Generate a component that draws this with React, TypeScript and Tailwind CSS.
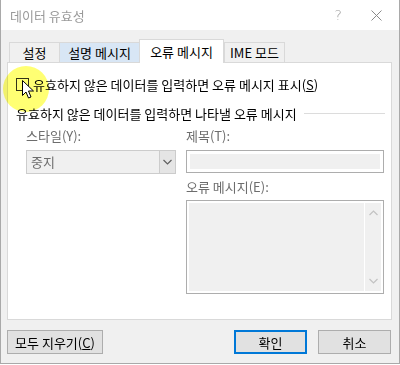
import React from 'react';

const FONT = { fontFamily: "'Noto Sans CJK KR', 'Noto Sans', sans-serif" };

function Cursor() {
  return (
    <svg width="13" height="20" viewBox="0 0 13 20" className="block">
      <path
        d="M0.5 0.5 L0.5 15.5 L4 12 L6.5 18 L9 17 L6.5 11 L11.5 11 Z"
        fill="#ffffff"
        stroke="#000000"
        strokeWidth="1"
        strokeLinejoin="miter"
      />
    </svg>
  );
}

function Chevron({ up = false, color = '#606060' }: { up?: boolean; color?: string }) {
  return (
    <svg width="9" height="6" viewBox="0 0 9 6" className="block">
      <path d={up ? 'M0.5 5 L4.5 1 L8.5 5' : 'M0.5 1 L4.5 5 L8.5 1'} fill="none" stroke={color} strokeWidth="1.2" />
    </svg>
  );
}

const TABS = [
  { label: '설정', w: 'w-[51px]', kind: 'idle' },
  { label: '설명 메시지', w: 'w-[81px]', kind: 'hover' },
  { label: '오류 메시지', w: 'w-[85px]', kind: 'active' },
  { label: 'IME 모드', w: 'w-[61px]', kind: 'idle' },
];

export default function App() {
  return (
    <div className="h-[365px] w-[400px] bg-white text-[13px] text-black" style={FONT}>
      <div className="flex h-[364px] w-[400px] flex-col border-x border-b border-[#a9a9a9]">
        {/* Title bar */}
        <div className="flex h-[30px] items-center bg-white pl-[9px]">
          <span className="text-[13px] leading-none text-[#9a9a9a]">데이터 유효성</span>
          <span className="ml-auto mr-[29px] text-[14px] leading-none text-[#9a9a9a]" style={{ fontFamily: "'DejaVu Sans', sans-serif", fontWeight: 300 }}>?</span>
          <svg width="11" height="11" viewBox="0 0 11 11" className="mr-[17px] block">
            <path d="M0.5 0.5 L10.5 10.5 M10.5 0.5 L0.5 10.5" stroke="#8a8a8a" strokeWidth="1" />
          </svg>
        </div>

        {/* Body */}
        <div className="relative flex flex-1 flex-col bg-[#f0f0f0] pl-[6px] pr-[7px] pt-[9px]">
          {/* Tabs */}
          <div className="relative z-10 ml-[2px] flex h-[23px] items-end">
            {TABS.map((t) => (
              <div
                key={t.label}
                className={
                  t.kind === 'active'
                    ? `${t.w} -mb-px flex h-[24px] items-center justify-center border border-b-0 border-[#d9d9d9] bg-white`
                    : t.kind === 'hover'
                    ? `${t.w} -mr-px flex h-[20px] items-center justify-center border border-b-0 border-[#d9d9d9] bg-[#d8e6f5]`
                    : `${t.w} -mr-px flex h-[20px] items-center justify-center border border-b-0 border-[#d9d9d9] bg-[#f0f0f0]`
                }
              >
                <span className="leading-none">{t.label}</span>
              </div>
            ))}
          </div>

          {/* Panel */}
          <div className="flex h-[258px] flex-col border border-[#d9d9d9] bg-white pl-[8px] pr-[6px] pt-[15px]">
            <div className="flex h-[13px] items-center">
              <div className="h-[13px] w-[13px] border border-[#333333] bg-white" />
              <span className="ml-[4px] leading-none">
                유효하지 않은 데이터를 입력하면 오류 메시지 표시(<span className="underline">S</span>)
              </span>
            </div>

            <div className="mt-[15px] flex h-[14px] items-center">
              <span className="leading-none">유효하지 않은 데이터를 입력하면 나타낼 오류 메시지</span>
              <div className="ml-[7px] h-px flex-1 bg-[#dcdcdc]" />
            </div>

            <div className="mt-[7px] flex pl-[10px]">
              {/* Left column */}
              <div className="flex w-[150px] flex-col">
                <span className="h-[18px] leading-[18px] text-[#6d6d6d]">스타일(Y):</span>
                <div className="mt-[5px] flex h-[24px] border border-[#cccccc] bg-[#f0f0f0]">
                  <span className="flex-1 pl-[4px] leading-[22px] text-[#6d6d6d]">중지</span>
                  <div className="flex w-[16px] items-center justify-center border-l border-[#cccccc] bg-[#e5e5e5]">
                    <Chevron />
                  </div>
                </div>
              </div>

              {/* Right column */}
              <div className="ml-[10px] flex w-[198px] flex-col">
                <span className="h-[18px] leading-[18px] text-[#6d6d6d]">제목(T):</span>
                <div className="mt-[5px] h-[23px] border border-[#adadad] bg-white p-[3px]">
                  <div className="h-full w-full bg-[#f0f0f0]" />
                </div>
                <span className="mt-[5px] h-[18px] leading-[18px] text-[#6d6d6d]">오류 메시지(E):</span>
                <div className="mt-[4px] flex h-[94px] border border-[#adadad] bg-white p-[2px]">
                  <div className="flex-1 bg-[#f0f0f0]" />
                  <div className="ml-px flex w-[16px] flex-col items-center justify-between bg-[#f0f0f0] py-[7px]">
                    <Chevron up color="#c2c2c2" />
                    <Chevron color="#c2c2c2" />
                  </div>
                </div>
              </div>
            </div>
          </div>

          {/* Buttons */}
          <div className="mt-[10px] flex h-[24px]">
            <button className="flex h-[24px] w-[96px] items-center justify-center border border-[#adadad] bg-[#e1e1e1] leading-none">
              모두 지우기(<span className="underline">C</span>)
            </button>
            <button className="ml-auto flex h-[24px] w-[73px] items-center justify-center border-2 border-[#0078d7] bg-[#e1e1e1] leading-none">
              확인
            </button>
            <button className="ml-[11px] mr-px flex h-[24px] w-[73px] items-center justify-center border border-[#adadad] bg-[#e1e1e1] leading-none">
              취소
            </button>
          </div>

          {/* Cursor highlight */}
          <div className="pointer-events-none absolute left-[2px] top-[36px] h-[46px] w-[46px] rounded-full bg-[rgba(255,255,0,0.55)] mix-blend-multiply" />
          <div className="pointer-events-none absolute left-[21px] top-[50px]">
            <Cursor />
          </div>
        </div>
      </div>
    </div>
  );
}
